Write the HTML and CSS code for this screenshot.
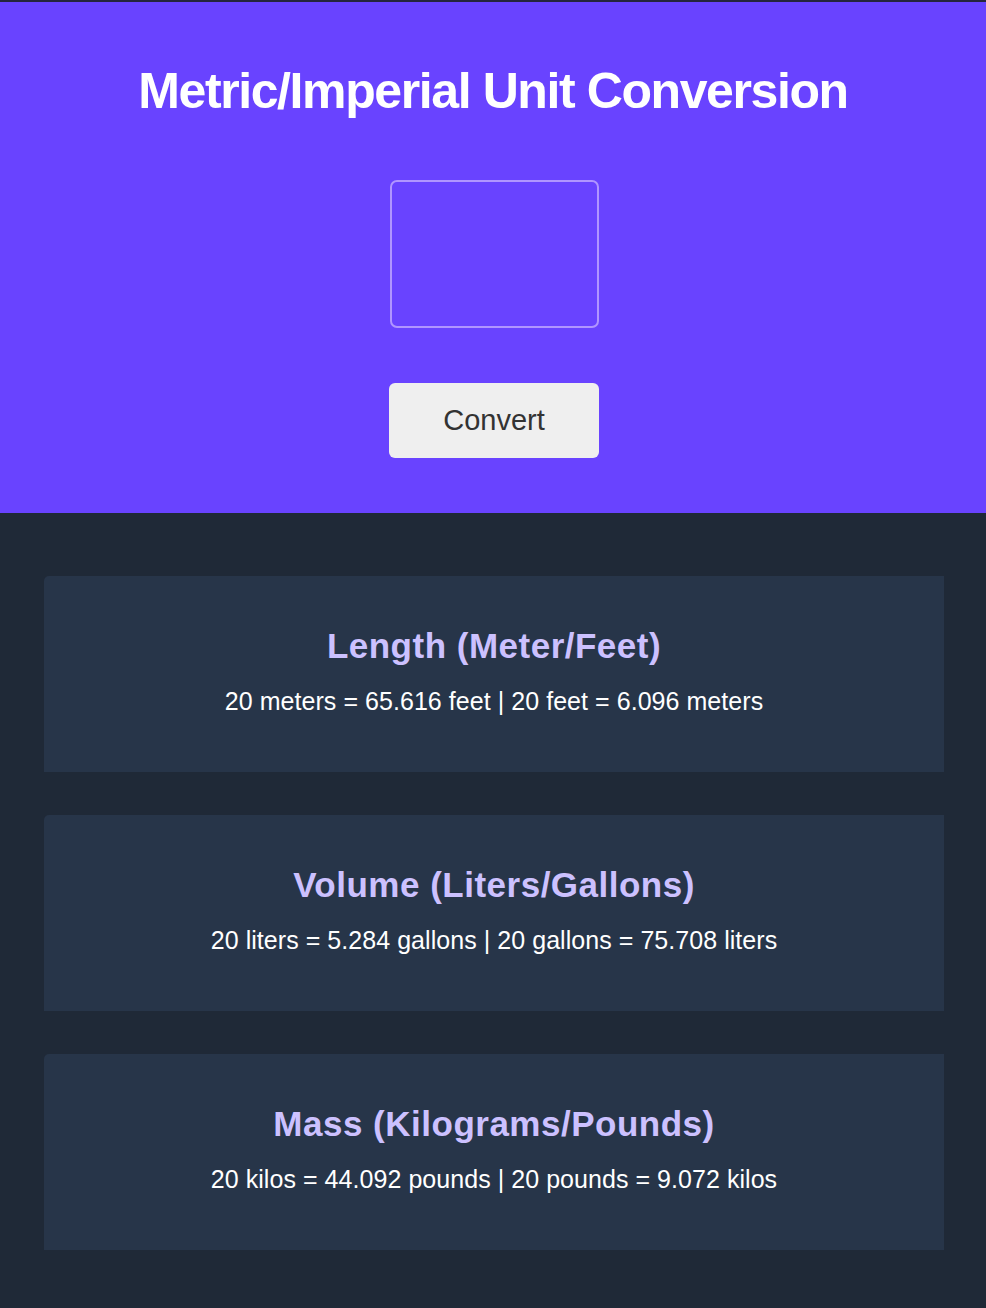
FILE: index.html
```html
<!DOCTYPE html>
<html lang="en">
<head>
<meta charset="utf-8">
<title>Metric/Imperial Unit Conversion</title>
<link rel="stylesheet" href="styles.css">
</head>
<body>
<header class="hero">
  <h1 class="title">Metric/Imperial Unit Conversion</h1>
  <input class="number-input" type="number" aria-label="Value to convert">
  <button class="convert-btn" type="button">Convert</button>
</header>
<main class="results">
  <section class="card">
    <h2 class="card-title">Length (Meter/Feet)</h2>
    <p class="card-text">20 meters = 65.616 feet | 20 feet = 6.096 meters</p>
  </section>
  <section class="card">
    <h2 class="card-title">Volume (Liters/Gallons)</h2>
    <p class="card-text">20 liters = 5.284 gallons | 20 gallons = 75.708 liters</p>
  </section>
  <section class="card">
    <h2 class="card-title">Mass (Kilograms/Pounds)</h2>
    <p class="card-text">20 kilos = 44.092 pounds | 20 pounds = 9.072 kilos</p>
  </section>
</main>
</body>
</html>
```
FILE: styles.css
```css
* { box-sizing: border-box; }
html, body { margin: 0; padding: 0; }
body {
  font-family: "Liberation Sans", Arial, sans-serif;
  background: #1f2937;
  border-top: 2px solid #25253d;
}
.hero {
  background: #6943ff;
  height: 511px;
  display: flex;
  flex-direction: column;
  align-items: center;
  padding-top: 59px;
}
.title {
  margin: 0;
  color: #ffffff;
  font-size: 50px;
  line-height: 60px;
  font-weight: 700;
  letter-spacing: -1.4px;
}
.number-input {
  margin-top: 59px;
  margin-left: 2px;
  width: 209px;
  height: 148px;
  background: transparent;
  border: 2px solid #b095ff;
  border-radius: 7px;
  outline: none;
  color: #fff;
  font-size: 40px;
  text-align: center;
}
.convert-btn {
  margin-top: 55px;
  margin-left: 2px;
  width: 210px;
  height: 75px;
  background: #efefef;
  border: none;
  border-radius: 6px;
  color: #333333;
  font-family: "Liberation Sans", Arial, sans-serif;
  font-size: 29px;
}
.results {
  display: flex;
  flex-direction: column;
  gap: 43px;
  padding: 63px 42px 59px 44px;
}
.card {
  background: #273549;
  height: 196px;
  border-radius: 5px 0 0 0;
  display: flex;
  flex-direction: column;
  align-items: center;
  padding-top: 49px;
}
.card-title {
  margin: 0;
  color: #ccc1ff;
  font-size: 35px;
  line-height: 42px;
  font-weight: 700;
  letter-spacing: 0.5px;
}
.card-text {
  margin: 21px 0 0;
  color: #ffffff;
  font-size: 25px;
  line-height: 26px;
  letter-spacing: 0.05px;
}
```
